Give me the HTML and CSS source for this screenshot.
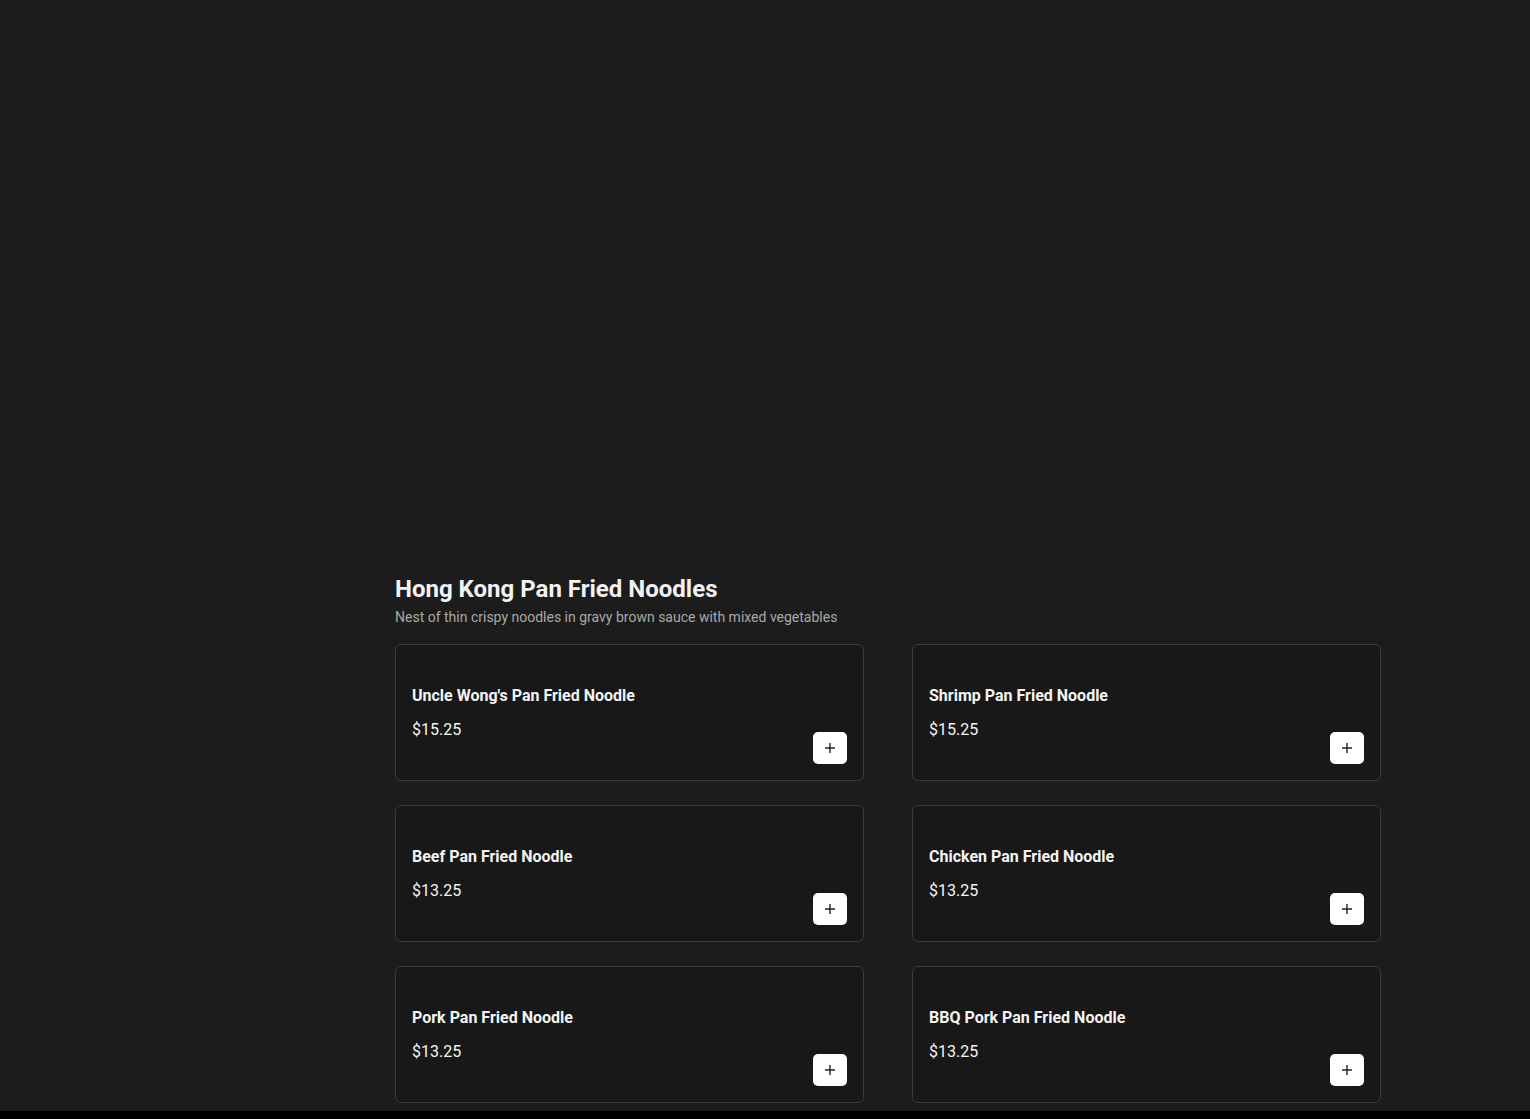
FILE: index.html
```html
<!DOCTYPE html>
<html lang="en">
<head>
    <meta charset="UTF-8">
    <meta name="viewport" content="width=device-width, initial-scale=1.0">
    <title>Hong Kong Pan Fried Noodles</title>
    <link rel="stylesheet" href="styles.css">
</head>
<body>

    <div class="page">
        <div class="hero"></div>

        <div class="layout">
            <aside class="side"></aside>

            <section class="menu-section">
                <h2>Hong Kong Pan Fried Noodles</h2>
                <p class="section-desc">Nest of thin crispy noodles in gravy brown sauce with mixed vegetables</p>

                <div class="item-grid">
                    <div class="item-card">
                        <div class="item-info">
                            <div class="item-name">Uncle Wong's Pan Fried Noodle</div>
                            <div class="item-price">$15.25</div>
                        </div>
                        <button class="add-btn" aria-label="Add">
                            <svg width="12" height="12" viewBox="0 0 12 12"><path d="M6 1v10M1 6h10" stroke="#222" stroke-width="1.4"/></svg>
                        </button>
                    </div>

                    <div class="item-card">
                        <div class="item-info">
                            <div class="item-name">Shrimp Pan Fried Noodle</div>
                            <div class="item-price">$15.25</div>
                        </div>
                        <button class="add-btn" aria-label="Add">
                            <svg width="12" height="12" viewBox="0 0 12 12"><path d="M6 1v10M1 6h10" stroke="#222" stroke-width="1.4"/></svg>
                        </button>
                    </div>

                    <div class="item-card">
                        <div class="item-info">
                            <div class="item-name">Beef Pan Fried Noodle</div>
                            <div class="item-price">$13.25</div>
                        </div>
                        <button class="add-btn" aria-label="Add">
                            <svg width="12" height="12" viewBox="0 0 12 12"><path d="M6 1v10M1 6h10" stroke="#222" stroke-width="1.4"/></svg>
                        </button>
                    </div>

                    <div class="item-card">
                        <div class="item-info">
                            <div class="item-name">Chicken Pan Fried Noodle</div>
                            <div class="item-price">$13.25</div>
                        </div>
                        <button class="add-btn" aria-label="Add">
                            <svg width="12" height="12" viewBox="0 0 12 12"><path d="M6 1v10M1 6h10" stroke="#222" stroke-width="1.4"/></svg>
                        </button>
                    </div>

                    <div class="item-card">
                        <div class="item-info">
                            <div class="item-name">Pork Pan Fried Noodle</div>
                            <div class="item-price">$13.25</div>
                        </div>
                        <button class="add-btn" aria-label="Add">
                            <svg width="12" height="12" viewBox="0 0 12 12"><path d="M6 1v10M1 6h10" stroke="#222" stroke-width="1.4"/></svg>
                        </button>
                    </div>

                    <div class="item-card">
                        <div class="item-info">
                            <div class="item-name">BBQ Pork Pan Fried Noodle</div>
                            <div class="item-price">$13.25</div>
                        </div>
                        <button class="add-btn" aria-label="Add">
                            <svg width="12" height="12" viewBox="0 0 12 12"><path d="M6 1v10M1 6h10" stroke="#222" stroke-width="1.4"/></svg>
                        </button>
                    </div>
                </div>
            </section>
        </div>
    </div>

</body>
</html>
```

FILE: styles.css
```css
html {
    background: #000;
}

body {
    margin: 0;
    font-family: Roboto, "Liberation Sans", Arial, sans-serif;
    color: #fff;
}

.page {
    background: #1c1c1c;
    height: 1111px;
    overflow: hidden;
}

.hero {
    height: 573px;
}

.layout {
    display: flex;
    padding-right: 149px;
}

.side {
    width: 395px;
    flex-shrink: 0;
}

.menu-section {
    flex: 1;
}

.menu-section h2 {
    margin: 0;
    font-size: 24px;
    line-height: 32px;
    font-weight: 700;
    color: #f2f2f2;
}

.section-desc {
    margin: 2px 0 17px;
    font-size: 14px;
    line-height: 20px;
    color: #a8a8a8;
}

.item-grid {
    display: grid;
    grid-template-columns: 1fr 1fr;
    column-gap: 48px;
    row-gap: 24px;
}

.item-card {
    display: flex;
    justify-content: space-between;
    align-items: flex-end;
    height: 137px;
    box-sizing: border-box;
    padding: 16px;
    background: #181818;
    border: 1px solid #3b3b3b;
    border-radius: 6px;
}

.item-info {
    align-self: center;
    display: flex;
    flex-direction: column;
    gap: 10px;
}

.item-name {
    font-size: 16px;
    line-height: 24px;
    font-weight: 700;
    color: #f4f4f4;
}

.item-price {
    font-size: 16px;
    line-height: 24px;
    color: #f4f4f4;
}

.add-btn {
    width: 34px;
    height: 32px;
    padding: 0;
    display: flex;
    align-items: center;
    justify-content: center;
    background: #fff;
    border: none;
    border-radius: 5px;
    cursor: pointer;
}
```
